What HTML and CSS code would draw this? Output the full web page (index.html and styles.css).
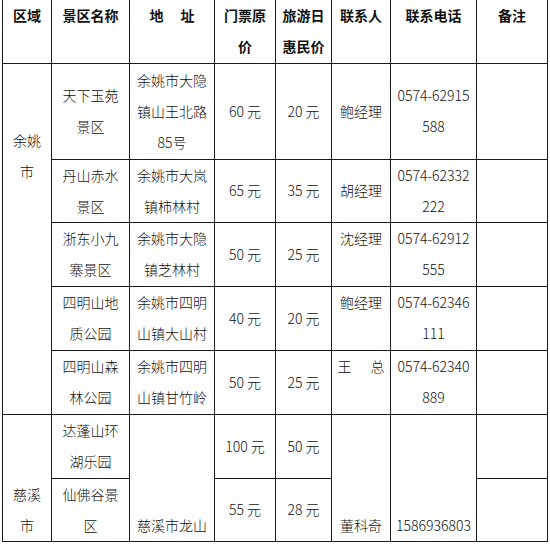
FILE: index.html
```
<!DOCTYPE html>
<html lang="zh">
<head>
<meta charset="utf-8">
<link rel="stylesheet" href="styles.css">
</head>
<body>
<table class="t">
<colgroup>
<col class="c1"><col class="c2"><col class="c3"><col class="c4"><col class="c5"><col class="c6"><col class="c7"><col class="c8">
</colgroup>
<tr class="hd">
<th>区域</th><th>景区名称</th><th>地<span class="sp"></span>址</th><th>门票原<br>价</th><th>旅游日<br>惠民价</th><th>联系人</th><th>联系电话</th><th>备注</th>
</tr>
<tr class="r1">
<td rowspan="5" class="yy">余姚<br>市</td><td>天下玉苑<br>景区</td><td>余姚市大隐<br>镇山王北路<br>85号</td><td>60 元</td><td>20 元</td><td>鲍经理</td><td>0574-62915<br>588</td><td></td>
</tr>
<tr class="r2">
<td>丹山赤水<br>景区</td><td>余姚市大岚<br>镇柿林村</td><td>65 元</td><td>35 元</td><td>胡经理</td><td>0574-62332<br>222</td><td></td>
</tr>
<tr class="r3">
<td>浙东小九<br>寨景区</td><td>余姚市大隐<br>镇芝林村</td><td>50 元</td><td>25 元</td><td class="top">沈经理</td><td>0574-62912<br>555</td><td></td>
</tr>
<tr class="r4">
<td>四明山地<br>质公园</td><td>余姚市四明<br>山镇大山村</td><td>40 元</td><td>20 元</td><td class="top">鲍经理</td><td>0574-62346<br>111</td><td></td>
</tr>
<tr class="r5">
<td>四明山森<br>林公园</td><td>余姚市四明<br>山镇甘竹岭</td><td>50 元</td><td>25 元</td><td class="top">王<span class="sp2"></span>总</td><td>0574-62340<br>889</td><td></td>
</tr>
<tr class="r6">
<td rowspan="2" class="bot">慈溪<br>市</td><td>达蓬山环<br>湖乐园</td><td rowspan="2" class="bot">慈溪市龙山</td><td>100 元</td><td>50 元</td><td rowspan="2" class="bot">董科奇</td><td rowspan="2" class="bot">1586936803</td><td></td>
</tr>
<tr class="r7">
<td>仙佛谷景<br>区</td><td>55 元</td><td>28 元</td><td></td>
</tr>
</table>
</body>
</html>
```
FILE: styles.css
```
html, body {
  margin: 0;
  padding: 0;
  background: #fff;
}
body {
  font-family: "Noto Sans CJK SC", "Noto Sans", sans-serif;
  font-size: 14px;
  color: #111;
}
.t {
  border-collapse: collapse;
  table-layout: fixed;
  width: 546px;
  margin: 0 0 0 2px;
}
.c1 { width: 49px; }
.c2 { width: 78px; }
.c3 { width: 85px; }
.c4 { width: 61px; }
.c5 { width: 56px; }
.c6 { width: 59px; }
.c7 { width: 86px; }
.c8 { width: 71px; }
th, td {
  border: 1px solid #1a1a1a;
  padding: 0;
  line-height: 31px;
  text-align: center;
  white-space: nowrap;
  overflow: hidden;
}
th {
  font-weight: bold;
  vertical-align: top;
  border-top: none;
}
td {
  vertical-align: middle;
  font-weight: 300;
}
.hd { height: 63px; }
.r1 { height: 96px; }
.r2 { height: 63px; }
.r3 { height: 64px; }
.r4 { height: 64px; }
.r5 { height: 64px; }
.r6 { height: 64px; }
.r7 { height: 61px; }
td.top { vertical-align: top; }
td.bot { vertical-align: bottom; }
td.yy {
  vertical-align: top;
  padding-top: 61px;
}
.sp {
  display: inline-block;
  width: 17px;
}
.sp2 {
  display: inline-block;
  width: 19px;
}
```
